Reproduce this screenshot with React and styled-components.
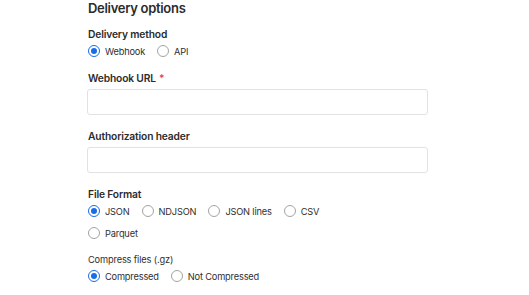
import React from "react";
import styled, { createGlobalStyle } from "styled-components";

const Global = createGlobalStyle`
  html, body { margin: 0; padding: 0; background: #ffffff; }
  body { font-family: Inter, "Noto Sans", sans-serif; color: #2b2b2b; }
`;

const Page = styled.div`
  padding: 0 0 0 87px;
  width: 341px;
  display: flex;
  flex-direction: column;
`;

const Heading = styled.h2`
  margin: 0;
  font-size: 13px;
  letter-spacing: -0.3px;
  line-height: 16px;
  font-weight: 600;
  color: #2b2b2b;
  padding-left: 1px;
`;

const Field = styled.div`
  display: flex;
  flex-direction: column;
  gap: ${(p) => p.$gap ?? 2}px;
  margin-top: ${(p) => p.$top ?? 14}px;
`;

const Label = styled.label`
  font-size: 10.25px;
  letter-spacing: -0.15px;
  line-height: 14px;
  font-weight: 600;
  color: #2b2b2b;
  padding-left: 1px;
`;

const SubLabel = styled.div`
  font-size: 9.25px;
  letter-spacing: -0.15px;
  line-height: 14px;
  font-weight: 400;
  color: #2e2e2e;
  padding-left: 1px;
`;

const Req = styled.span`
  color: #e5484d;
  margin-left: 3px;
`;

const Input = styled.input`
  box-sizing: border-box;
  height: 26px;
  width: 341px;
  border: 1px solid #e2e2e2;
  border-radius: 3px;
  background: #fff;
  outline: none;
  font: inherit;
`;

const Options = styled.div`
  display: flex;
  flex-wrap: wrap;
  column-gap: 12px;
  row-gap: 8px;
  max-width: 260px;
  padding-left: 1px;
`;

const Option = styled.label`
  display: flex;
  align-items: center;
  gap: 5px;
  height: 14px;
  font-size: 9.25px;
  letter-spacing: -0.18px;
  color: #2e2e2e;
  cursor: pointer;
`;

const Circle = styled.span`
  box-sizing: border-box;
  width: 12px;
  height: 12px;
  border-radius: 50%;
  border: 1px solid ${(p) => (p.$on ? "#1a6ce6" : "#a3a3a3")};
  display: flex;
  align-items: center;
  justify-content: center;
  background: #fff;
  &::after {
    content: "";
    width: 6px;
    height: 6px;
    border-radius: 50%;
    background: ${(p) => (p.$on ? "#1a6ce6" : "transparent")};
  }
`;

const Radio = ({ on, children }) => (
  <Option>
    <Circle $on={on} />
    <span>{children}</span>
  </Option>
);

export default function App() {
  return (
    <>
      <Global />
      <Page>
        <Heading>Delivery options</Heading>
        <Field $top={11} $gap={3}>
          <Label>Delivery method</Label>
          <Options>
            <Radio on>Webhook</Radio>
            <Radio>API</Radio>
          </Options>
        </Field>
        <Field $top={13} $gap={4}>
          <Label>
            Webhook URL<Req>*</Req>
          </Label>
          <Input />
        </Field>
        <Field $gap={4}>
          <Label>Authorization header</Label>
          <Input />
        </Field>
        <Field $gap={3}>
          <Label>File Format</Label>
          <Options>
            <Radio on>JSON</Radio>
            <Radio>NDJSON</Radio>
            <Radio>JSON lines</Radio>
            <Radio>CSV</Radio>
            <Radio>Parquet</Radio>
          </Options>
        </Field>
        <Field $top={13} $gap={2}>
          <SubLabel>Compress files (.gz)</SubLabel>
          <Options>
            <Radio on>Compressed</Radio>
            <Radio>Not Compressed</Radio>
          </Options>
        </Field>
      </Page>
    </>
  );
}
